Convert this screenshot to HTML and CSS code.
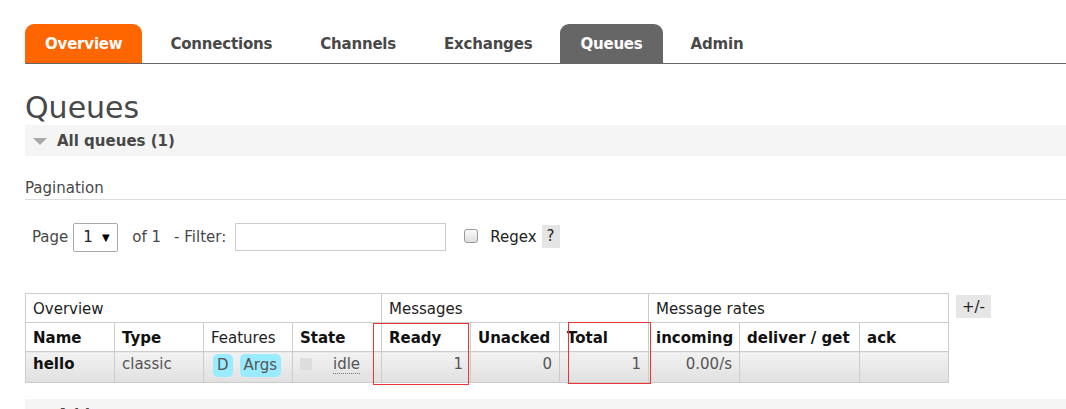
FILE: index.html
```html
<!DOCTYPE html>
<html>
<head>
<meta charset="utf-8">
<link rel="stylesheet" href="styles.css">
</head>
<body>
<div class="page">
  <ul class="menu">
    <li class="tab tab-overview">Overview</li>
    <li class="tab">Connections</li>
    <li class="tab">Channels</li>
    <li class="tab">Exchanges</li>
    <li class="tab tab-current">Queues</li>
    <li class="tab">Admin</li>
  </ul>

  <h1 class="title">Queues</h1>

  <div class="section-head">
    <span class="tri"></span>
    <span class="section-title">All queues (1)</span>
  </div>

  <div class="pag-head">Pagination</div>

  <div class="pag-row">
    <span class="lbl">Page</span>
    <span class="select">1 <span class="arrow">▼</span></span>
    <span class="lbl of">of 1</span>
    <span class="lbl filter">- Filter:</span>
    <span class="input"></span>
    <span class="check"></span>
    <span class="lbl regex">Regex</span>
    <span class="help">?</span>
  </div>

  <div class="table-row">
    <div class="table-wrap">
      <table class="list">
        <colgroup>
          <col class="c89"><col class="c89"><col class="c89"><col class="c89">
          <col class="c89"><col class="c89"><col class="c89">
          <col class="c91"><col class="c120"><col class="c89">
        </colgroup>
        <thead>
          <tr class="group">
            <th colspan="4">Overview</th>
            <th colspan="3">Messages</th>
            <th colspan="3">Message rates</th>
          </tr>
          <tr class="heads">
            <th>Name</th>
            <th>Type</th>
            <th class="normal">Features</th>
            <th>State</th>
            <th>Ready</th>
            <th>Unacked</th>
            <th>Total</th>
            <th>incoming</th>
            <th>deliver / get</th>
            <th>ack</th>
          </tr>
        </thead>
        <tbody>
          <tr class="data">
            <td class="name">hello</td>
            <td class="muted">classic</td>
            <td class="feat"><span class="pill">D</span><span class="pill">Args</span></td>
            <td class="state"><span class="sq"></span><span class="idle">idle</span></td>
            <td class="num">1</td>
            <td class="num">0</td>
            <td class="num">1</td>
            <td class="num">0.00/s</td>
            <td></td>
            <td></td>
          </tr>
        </tbody>
      </table>
      <div class="mark mark-ready"></div>
      <div class="mark mark-total"></div>
    </div>
    <span class="toggle">+/-</span>
  </div>

  <div class="section-head bottom">
    <span class="tri"></span>
    <span class="section-title">Add a new queue</span>
  </div>
</div>
</body>
</html>
```

FILE: styles.css
```css
html, body {
  margin: 0;
  padding: 0;
  background: #fff;
  overflow: hidden;
}
body {
  font-family: "DejaVu Sans", Verdana, sans-serif;
  font-size: 15px;
  color: #484848;
}
.page {
  padding: 24px 0 0 25px;
  height: 385px;
  overflow: hidden;
}
.menu {
  list-style: none;
  margin: 0;
  padding: 0;
  display: flex;
  gap: 8px;
  border-bottom: 1px solid #666;
  height: 39px;
}
.tab {
  font-weight: bold;
  font-size: 15px;
  line-height: 19px;
  padding: 11px 20px 9px;
  letter-spacing: -0.2px;
  color: #484848;
  border-radius: 9px 9px 0 0;
}
.tab-overview {
  background: #f60;
  color: #fff;
}
.tab-current {
  background: #666;
  color: #fff;
}
.title {
  margin: 0;
  padding-top: 26px;
  font-size: 30px;
  font-weight: normal;
  line-height: 36px;
  color: #484848;
  height: 36px;
}
.section-head {
  background: #f5f5f5;
  height: 31px;
  display: flex;
  align-items: center;
  margin-top: -1px;
}
.tri {
  width: 0;
  height: 0;
  border-left: 7px solid transparent;
  border-right: 7px solid transparent;
  border-top: 7px solid #aaa;
  margin: 2px 10px 0 8px;
}
.section-title {
  font-weight: bold;
  font-size: 15px;
  color: #484848;
}
.pag-head {
  margin-top: 23px;
  padding-bottom: 2px;
  border-bottom: 1px solid #ddd;
  line-height: 18px;
}
.pag-row {
  display: flex;
  align-items: center;
  height: 28px;
  margin-top: 23px;
  padding-left: 7px;
}
.lbl {
  line-height: 18px;
}
.select {
  box-sizing: border-box;
  width: 45px;
  height: 29px;
  margin-left: 5px;
  border: 1px solid #aaa;
  border-radius: 2px;
  display: flex;
  align-items: center;
  padding-left: 9px;
  color: #222;
}
.arrow {
  font-size: 10px;
  margin-left: 9px;
  color: #000;
}
.of {
  margin-left: 14px;
}
.filter {
  margin-left: 13px;
}
.input {
  box-sizing: border-box;
  width: 211px;
  height: 28px;
  margin-left: 9px;
  border: 1px solid #ccc;
}
.check {
  box-sizing: border-box;
  width: 14px;
  height: 14px;
  margin-left: 18px;
  margin-top: -2px;
  border: 1px solid #999;
  border-radius: 3px;
  background: linear-gradient(#fafafa, #dedede);
}
.regex {
  margin-left: 12px;
  color: #222;
}
.help {
  margin-left: 5px;
  width: 18px;
  height: 23px;
  background: #e4e4e4;
  color: #222;
  display: flex;
  align-items: center;
  justify-content: center;
  margin-top: -2px;
}
.table-row {
  display: flex;
  align-items: flex-start;
  gap: 7px;
  margin-top: 42px;
}
.table-wrap {
  position: relative;
}
.list {
  border-collapse: collapse;
  table-layout: fixed;
  width: 923px;
}
.c89 { width: 89px; }
.c91 { width: 91px; }
.c120 { width: 120px; }
.list th, .list td {
  border: 1px solid #ccc;
  text-align: left;
  padding: 0 7px;
  line-height: 18px;
  white-space: nowrap;
  overflow: hidden;
}
.group th {
  font-weight: normal;
  color: #222;
  height: 27px;
  padding-top: 1px;
}
.heads th {
  font-weight: bold;
  color: #111;
  height: 27px;
  padding-top: 1px;
}
.heads th.normal {
  font-weight: normal;
  color: #222;
}
.data td {
  height: 31px;
  box-sizing: border-box;
  vertical-align: top;
  padding-top: 3px;
  background: linear-gradient(#f2f2f2, #e0e0e0);
  color: #555;
}
.data td.name {
  font-weight: bold;
  color: #111;
}
.data td.num {
  text-align: right;
}
.data td.feat {
  padding-left: 9px;
  padding-top: 2px;
}
.pill {
  display: inline-block;
  vertical-align: top;
  background: #99ebff;
  border-radius: 5px;
  padding: 2px 4px;
  line-height: 19px;
  margin-right: 7px;
  color: #555;
}
.state .sq {
  display: inline-block;
  width: 12px;
  height: 12px;
  background: #ddd;
  vertical-align: -1px;
  margin-right: 21px;
}
.idle {
  border-bottom: 1px dotted #777;
  color: #555;
}
.mark {
  position: absolute;
  border: 1px solid #e33;
  box-sizing: border-box;
}
.mark-ready {
  left: 348px;
  top: 30px;
  width: 96px;
  height: 62px;
}
.mark-total {
  left: 543px;
  top: 29px;
  width: 83px;
  height: 62px;
}
.toggle {
  background: #e6e6e6;
  color: #222;
  width: 35px;
  height: 23px;
  margin-top: 2px;
  display: flex;
  align-items: center;
  justify-content: center;
}
.bottom {
  margin-top: 16px;
}
```
